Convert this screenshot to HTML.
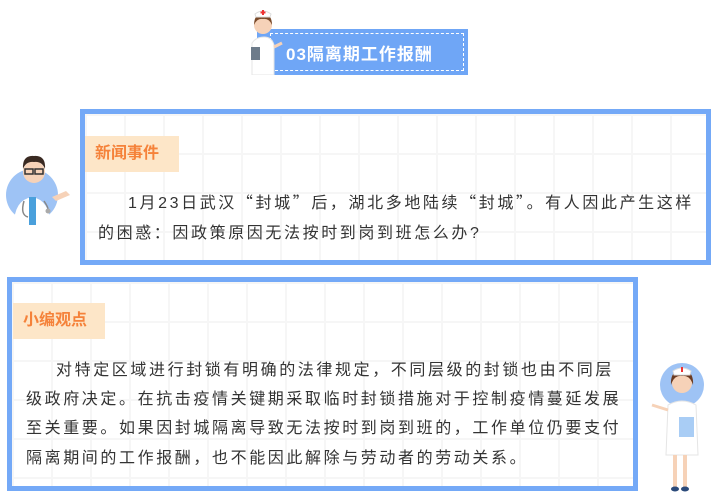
<!DOCTYPE html>
<html><head><meta charset="utf-8"><style>
*{margin:0;padding:0;box-sizing:border-box}
body{width:717px;height:500px;background:#fff;position:relative;overflow:hidden;font-family:"Liberation Sans","Noto Sans CJK SC",sans-serif}
.box{position:absolute;border:5px solid #74a9f7;background-color:#fff;
background-image:linear-gradient(#f6f6f6 2px,transparent 2px),linear-gradient(90deg,#f6f6f6 2px,transparent 2px);background-size:39px 39px}
.tag{position:absolute;background:#fde6c8;color:#f5823a;font-weight:bold;font-size:16px;line-height:36px;padding-left:10px}
.t{position:absolute;font-size:16px;color:#333;white-space:nowrap;letter-spacing:2.6px}
.q{font-family:"Noto Sans CJK SC",sans-serif}
</style></head><body>
<!-- header -->
<div style="position:absolute;left:257px;top:29px;width:211px;height:46px;background:#6fa6f6"></div>
<div style="position:absolute;left:270px;top:33px;width:194px;height:38px;border:1px dashed #fff"></div>
<div style="position:absolute;left:286px;top:40px;color:#fff;font-weight:bold;font-size:17px;letter-spacing:1px">03隔离期工作报酬</div>
<svg style="position:absolute;left:244px;top:5px" width="40" height="70" viewBox="0 0 40 70">
<path d="M8 38 Q12 32 20 32 Q28 32 30 40 L30 70 L8 70Z" fill="#fff" stroke="#e5e5e5"/>
<circle cx="19" cy="20" r="9" fill="#f6d2b8"/>
<path d="M10 20 Q10 9 19 9 Q28 9 28 20 Q25 13 19 14 Q13 13 10 20Z" fill="#7a4a2a"/>
<path d="M11 9 Q19 3 27 9 L26 12 L12 12Z" fill="#fff" stroke="#ddd"/>
<rect x="18" y="5" width="2" height="5" fill="#e33"/><rect x="16.5" y="6.5" width="5" height="2" fill="#e33"/>
<rect x="7" y="42" width="9" height="13" fill="#6d7b8a"/>
<path d="M30 42 L38 38" stroke="#f6d2b8" stroke-width="3"/>
</svg>
<!-- box1 -->
<div class="box" style="left:80px;top:109px;width:631px;height:156px"></div>
<div class="tag" style="left:85px;top:136px;width:94px">新闻事件</div>
<div class="t" style="left:128px;top:189px">1月23日武汉<span class="q">“</span>封城<span class="q">”</span>后，湖北多地陆续<span class="q">“</span>封城<span class="q">”</span>。有人因此产生这样</div>
<div class="t" style="left:98px;top:219px">的困惑：因政策原因无法按时到岗到班怎么办?</div>
<svg style="position:absolute;left:4px;top:145px" width="68" height="80" viewBox="0 0 68 80">
<circle cx="28" cy="50" r="26" fill="#9ec3f5"/>
<path d="M10 80 Q10 55 28 52 Q46 55 46 80Z" fill="#fff"/>
<rect x="25" y="52" width="7" height="28" fill="#4aa0dc"/>
<circle cx="30" cy="27" r="11" fill="#f6d2b8"/>
<path d="M19 24 Q18 10 30 11 Q42 10 41 24 Q38 16 30 17 Q22 16 19 24Z" fill="#3a2a22"/>
<rect x="21" y="24" width="8" height="5" fill="none" stroke="#333" stroke-width="1.5"/><rect x="31" y="24" width="8" height="5" fill="none" stroke="#333" stroke-width="1.5"/>
<path d="M20 56 Q16 70 24 72 M40 56 Q44 62 44 64" stroke="#888" stroke-width="1.5" fill="none"/>
<circle cx="44" cy="66" r="2.5" fill="#aaa"/>
<path d="M48 52 L62 46 L66 50 L52 56Z" fill="#f6d2b8"/>
</svg>
<!-- box2 -->
<div class="box" style="left:7px;top:277px;width:631px;height:214px"></div>
<div class="tag" style="left:13px;top:303px;width:92px">小编观点</div>
<div class="t" style="left:56px;top:356px">对特定区域进行封锁有明确的法律规定，不同层级的封锁也由不同层</div>
<div class="t" style="left:26px;top:385px">级政府决定。在抗击疫情关键期采取临时封锁措施对于控制疫情蔓延发展</div>
<div class="t" style="left:26px;top:414px">至关重要。如果因封城隔离导致无法按时到岗到班的，工作单位仍要支付</div>
<div class="t" style="left:26px;top:444px">隔离期间的工作报酬，也不能因此解除与劳动者的劳动关系。</div>
<svg style="position:absolute;left:648px;top:355px" width="64" height="140" viewBox="0 0 64 140">
<circle cx="34" cy="30" r="22" fill="#9ec3f5"/>
<path d="M20 50 Q34 42 48 50 L50 100 L18 100Z" fill="#fff" stroke="#e5e5e5"/>
<rect x="31" y="62" width="15" height="20" fill="#a9cdf5"/>
<circle cx="34" cy="28" r="10" fill="#f6d2b8"/>
<path d="M23 30 Q22 15 34 16 Q46 15 45 30 Q42 20 34 21 Q26 20 23 30Z" fill="#6b3b22"/>
<path d="M25 16 Q34 10 43 16 L42 20 L26 20Z" fill="#fff" stroke="#ddd"/>
<rect x="33" y="12" width="2" height="5" fill="#e33"/>
<path d="M20 55 L4 50" stroke="#f6d2b8" stroke-width="3"/>
<rect x="25" y="100" width="4" height="32" fill="#f6d2b8"/><rect x="35" y="100" width="4" height="32" fill="#f6d2b8"/>
<ellipse cx="27" cy="134" rx="4" ry="2.5" fill="#2b4a7a"/><ellipse cx="37" cy="134" rx="4" ry="2.5" fill="#2b4a7a"/>
</svg>
</body></html>
